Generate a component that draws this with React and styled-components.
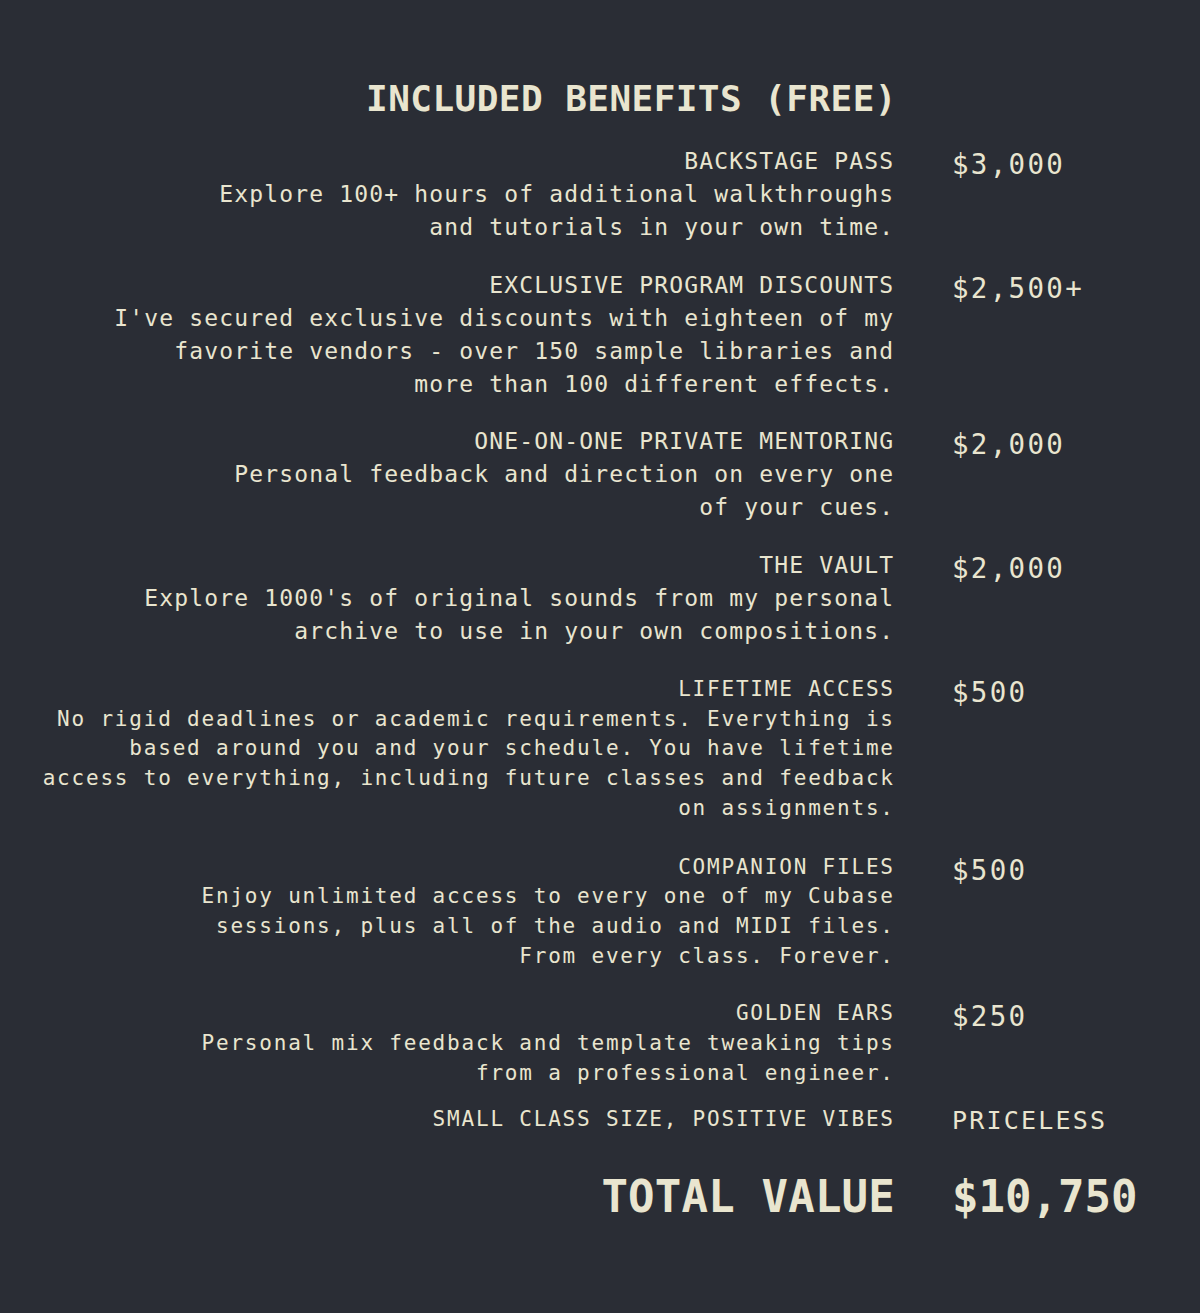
import styled, { createGlobalStyle } from 'styled-components';

const GlobalStyle = createGlobalStyle`
  body {
    margin: 0;
    background: #2a2d35;
  }
`;

const Page = styled.main`
  min-height: 1313px;
  box-sizing: border-box;
  padding: 77px 40px 0;
  background: #2a2d35;
  color: #e9e5cf;
  font-family: 'DejaVu Sans Mono', 'Liberation Mono', monospace;
`;

const Row = styled.section`
  display: grid;
  grid-template-columns: 1fr 208px;
  column-gap: 59px;
  align-items: start;
  margin-top: ${(p) => p.$gap || 0}px;
`;

const Title = styled.h2`
  margin: 0 -4px 0 0;
  font-size: 36px;
  line-height: 44px;
  font-weight: bold;
  letter-spacing: 0.45px;
  text-align: right;
`;

const Left = styled.div`
  text-align: right;
  font-size: ${(p) => (p.$compact ? '21px' : '23px')};
  line-height: ${(p) => (p.$compact ? '29.7px' : '33px')};
  letter-spacing: ${(p) => (p.$compact ? '1.8px' : '1.15px')};
  margin-right: -${(p) => (p.$compact ? '1.8px' : '1.15px')};
`;

const Name = styled.div`
  text-transform: uppercase;
`;

const Line = styled.div`
  white-space: pre;
`;

const Price = styled.div`
  font-size: ${(p) => (p.$word ? '25px' : '27.5px')};
  line-height: ${(p) => (p.$word ? '32px' : p.$compact ? '34px' : '39px')};
  letter-spacing: ${(p) => (p.$word ? '2.2px' : '2.3px')};
`;

const TotalLabel = styled.div`
  text-align: right;
  font-size: 44px;
  line-height: 56px;
  font-weight: bold;
  letter-spacing: 0.2px;
  margin-right: -2px;
`;

const TotalPrice = styled.div`
  font-size: 44px;
  line-height: 56px;
  font-weight: bold;
`;

const benefits = [
  {
    name: 'Backstage Pass',
    price: '$3,000',
    gap: 24,
    lines: ['Explore 100+ hours of additional walkthroughs', 'and tutorials in your own time.'],
  },
  {
    name: 'Exclusive Program Discounts',
    price: '$2,500+',
    gap: 25,
    lines: [
      "I've secured exclusive discounts with eighteen of my",
      'favorite vendors - over 150 sample libraries and',
      'more than 100 different effects.',
    ],
  },
  {
    name: 'One-on-One Private Mentoring',
    price: '$2,000',
    gap: 24,
    lines: ['Personal feedback and direction on every one', 'of your cues.'],
  },
  {
    name: 'The Vault',
    price: '$2,000',
    gap: 25,
    lines: ["Explore 1000's of original sounds from my personal", 'archive to use in your own compositions.'],
  },
  {
    name: 'Lifetime Access',
    price: '$500',
    gap: 27,
    compact: true,
    lines: [
      'No rigid deadlines or academic requirements. Everything is',
      'based around you and your schedule. You have lifetime',
      'access to everything, including future classes and feedback',
      'on assignments.',
    ],
  },
  {
    name: 'Companion Files',
    price: '$500',
    gap: 29,
    compact: true,
    lines: [
      'Enjoy unlimited access to every one of my Cubase',
      'sessions, plus all of the audio and MIDI files.',
      'From every class. Forever.',
    ],
  },
  {
    name: 'Golden Ears',
    price: '$250',
    gap: 28,
    compact: true,
    lines: ['Personal mix feedback and template tweaking tips', 'from a professional engineer.'],
  },
  {
    name: 'Small Class Size, Positive Vibes',
    price: 'PRICELESS',
    gap: 17,
    compact: true,
    word: true,
    lines: [],
  },
];

export default function App() {
  return (
    <Page>
      <GlobalStyle />
      <Row>
        <Title>INCLUDED BENEFITS (FREE)</Title>
      </Row>
      {benefits.map((b) => (
        <Row key={b.name} $gap={b.gap}>
          <Left $compact={b.compact}>
            <Name>{b.name}</Name>
            {b.lines.map((l) => (
              <Line key={l}>{l}</Line>
            ))}
          </Left>
          <Price $compact={b.compact} $word={b.word}>
            {b.price}
          </Price>
        </Row>
      ))}
      <Row $gap={32}>
        <TotalLabel>TOTAL VALUE</TotalLabel>
        <TotalPrice>$10,750</TotalPrice>
      </Row>
    </Page>
  );
}
